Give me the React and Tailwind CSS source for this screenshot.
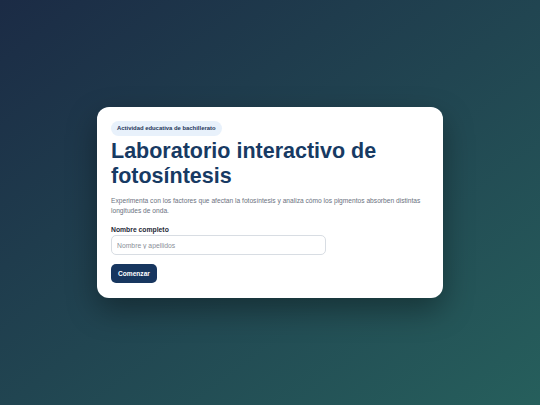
import React from 'react';

const App = () => {
  return (
    <div
      className="w-full h-[405px] flex items-center justify-center bg-gradient-to-br from-[#1b2b45] to-[#265f5c]"
      style={{ fontFamily: '"Liberation Sans", Arial, sans-serif' }}
    >
      <div className="w-[346px] bg-white rounded-[12px] px-[14px] pt-[14px] pb-[15px] shadow-[0_12px_30px_rgba(0,0,0,0.35)]">
        <div className="flex w-fit items-center h-[15px] bg-[#e8f1fb] text-[#1d3558] text-[5.9px] font-bold rounded-full px-[6px]">
          Actividad educativa de bachillerato
        </div>
        <h1 className="mt-[3px] text-[21.5px] leading-[25px] font-bold text-[#173a63]">
          Laboratorio interactivo de fotosíntesis
        </h1>
        <p className="mt-[7px] text-[6.65px] leading-[10px] text-[#6b7280]">
          Experimenta con los factores que afectan la fotosíntesis y analiza cómo los pigmentos absorben distintas longitudes de onda.
        </p>
        <label className="block mt-[8.5px] text-[6.8px] leading-[9px] font-bold text-[#1f2937]">
          Nombre completo
        </label>
        <input
          type="text"
          placeholder="Nombre y apellidos"
          className="mt-[1.5px] block w-[215px] h-[20px] rounded-[5px] border border-[#d8dde3] px-[5px] text-[6.8px] placeholder:text-[#8a8f98] outline-none"
        />
        <button className="mt-[9px] flex items-center h-[19px] px-[7px] rounded-[5px] bg-[#17365f] text-white text-[6.6px] font-bold">
          Comenzar
        </button>
      </div>
    </div>
  );
};

export default App;
